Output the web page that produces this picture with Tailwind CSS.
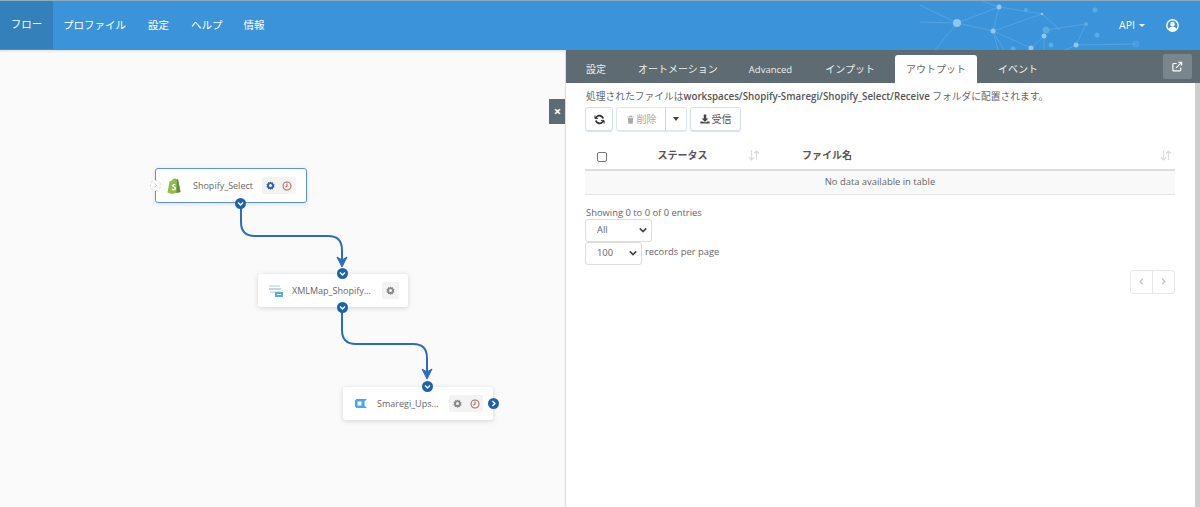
<!DOCTYPE html>
<html lang="ja">
<head>
    <meta charset="UTF-8">
    <title>Flow</title>
    <script src="https://cdn.jsdelivr.net/npm/@tailwindcss/browser@4"></script>
</head>
<body class="h-[507px] overflow-hidden bg-white font-['Open_Sans','Noto_Sans_CJK_JP',sans-serif] text-[11px] text-[#666]">

    <!-- Top nav -->
    <header class="relative h-[50px] bg-[#3b93da] border-t border-[#8fa9bd] flex items-stretch justify-between overflow-hidden text-white text-[10.5px]">
        <nav class="flex">
            <a class="w-[53px] mb-[1px] bg-[#3380ba] flex items-center justify-center">フロー</a>
            <a class="ml-[10px] flex items-center">プロファイル</a>
            <a class="ml-[22px] flex items-center">設定</a>
            <a class="ml-[22px] flex items-center">ヘルプ</a>
            <a class="ml-[21px] flex items-center">情報</a>
        </nav>
        <svg class="absolute left-[920px] top-[-1px]" width="240" height="50" viewBox="0 0 240 50">
            <g stroke="#8cc8f2" stroke-width="0.7" opacity="0.45" fill="none">
                <path d="M37 23L79 7L73 31L37 23M79 7L122 14L73 31M73 31L111 48M73 31L84 50M73 31L78 50M111 48L124 36V50M122 14L140 30M126 30L166 24M37 23L0 5M37 23L0 22M37 23L15 50M156 45L215 44M156 45L145 50M166 24L156 45M60 0L79 7"/>
            </g>
            <g fill="#8cc8f2">
                <circle cx="37" cy="23" r="4" />
                <circle cx="79" cy="7" r="2.500" />
                <circle cx="73" cy="31" r="2.500" />
                <circle cx="122" cy="14" r="1.200" />
                <circle cx="124" cy="36" r="2.500" />
                <circle cx="111" cy="48" r="2.500" />
                <circle cx="156" cy="45" r="2.500" />
            </g>
            <g fill="#5aaae6">
                <circle cx="166" cy="24" r="2" />
                <circle cx="126" cy="30" r="3.500" />
                <circle cx="131" cy="45" r="2.500" />
                <circle cx="175" cy="10" r="2.500" />
                <circle cx="177" cy="35" r="2.500" />
                <circle cx="106" cy="10" r="2" />
                <circle cx="93" cy="49" r="2.500" />
                <circle cx="216" cy="44" r="3.500" opacity="0.5" />
            </g>
        </svg>
        <div class="relative flex items-center">
            <span class="mr-[21px] flex items-center">API<span class="ml-[4px] border-x-[3px] border-t-[3.500px] border-x-transparent border-t-white"></span></span>
            <svg class="mr-[21px]" width="13" height="13" viewBox="0 0 24 24">
                <circle cx="12" cy="12" r="10.500" fill="none" stroke="#fff" stroke-width="2.600"/>
                <circle cx="12" cy="9.500" r="4.200" fill="#fff"/>
                <path d="M4.500 19c1.500-3.500 4-4.500 7.500-4.500s6 1 7.500 4.500c-2 2-4.500 3.500-7.500 3.500s-5.500-1.500-7.500-3.500z" fill="#fff"/>
            </svg>
        </div>
    </header>

    <main class="flex h-[457px]">
        <!-- Flow canvas -->
        <section class="relative w-[565px] bg-[#fafafa] shadow-[inset_0_3px_3px_-2px_rgba(0,0,0,0.12)]">
            <svg class="absolute inset-0" width="565" height="457" fill="none">
                <path d="M241 153V172Q241 186 255 186H328Q342 186 342 200V212" stroke="#2a6dbd" stroke-width="2"/>
                <path d="M337 207L342 217L347 207L342 210z" fill="#2a6dbd" stroke="#2a6dbd" stroke-width="1"/>
                <path d="M342 258V280Q342 294 356 294H413Q427 294 427 308V325" stroke="#2a6dbd" stroke-width="2"/>
                <path d="M422 319L427 329L432 319L427 322z" fill="#2a6dbd" stroke="#2a6dbd" stroke-width="1"/>
            </svg>

            <!-- Shopify_Select -->
            <div class="absolute left-[155px] top-[118px] w-[152px] h-[35px] bg-white border border-[#5b95d8] rounded-[3px] flex items-center shadow-[0_1px_4px_rgba(0,0,0,0.12)]">
                <svg class="ml-[11px]" width="14" height="16" viewBox="0 0 14 16">
                    <path d="M2.500 3.500L5 2.500C6 0.500 8 0 9.500 1L11 1.500L13.500 14L5 16L0.500 14.500z" fill="#8dbe4b"/>
                    <path d="M10 1.200L11 1.500L13.500 14L9.500 15z" fill="#5f8e3a"/>
                    <path d="M8.500 6.300C7 5.500 5 6 5 7.500C5 9 7.500 9 7.500 10.300C7.500 11.200 6.200 11.200 5 10.500L4.600 12C6.500 13 9 12.500 9 10.300C9 8.500 6.700 8.300 6.700 7.500C6.700 6.900 7.500 6.900 8.300 7.300z" fill="#fff"/>
                </svg>
                <span class="ml-[12px] w-[70px] mt-[1px] text-[9px] text-[#666]">Shopify_Select</span>
                <span class="ml-[-1px] w-[34px] h-[17px] bg-[#f3f3f3] rounded-[2px] flex items-center justify-center gap-[7px]">
                    <svg width="9" height="9" viewBox="0 0 24 24"><path d="M12 1l2.500 3.300 4-1 .8 4 3.700 2-2 3.700 2 3.700-4 1.500-.8 4-4-1-2.200 2.800-2.500-3.300-4 1-.8-4-3.700-2 2-3.700-2-3.700 4-1.500.8-4 4 1z" fill="#2f68ad"/><circle cx="12" cy="12" r="4" fill="#f3f3f3"/></svg>
                    <svg width="10" height="10" viewBox="0 0 24 24" fill="none" stroke="#b0655c" stroke-width="2.500"><circle cx="12" cy="12" r="9.500"/><path d="M12 6v6.500l-3.500 2"/></svg>
                </span>
                <span class="absolute left-[-6px] top-[11px] w-[11px] h-[11px] rounded-full border border-dashed border-[#ddd] bg-[#fafafa] flex items-center justify-center">
                    <svg width="5" height="5" viewBox="0 0 10 10" fill="none" stroke="#ccc" stroke-width="2"><path d="M3 1l4 4-4 4"/></svg>
                </span>
                <span class="absolute left-[79px] bottom-[-7px] w-[11px] h-[11px] rounded-full bg-[#1f62ac] flex items-center justify-center">
                    <svg width="7" height="7" viewBox="0 0 10 10" fill="none" stroke="#fff" stroke-width="2"><path d="M1.500 3.500L5 7l3.500-3.500"/></svg>
                </span>
            </div>

            <!-- XMLMap -->
            <div class="absolute left-[258px] top-[224px] w-[150px] h-[33px] bg-white rounded-[3px] flex items-center shadow-[0_1px_5px_rgba(0,0,0,0.16)]">
                <svg class="ml-[11px]" width="14" height="12" viewBox="0 0 14 12">
                    <rect x="0" y="0" width="11" height="2" fill="#d5e6f2"/>
                    <rect x="0" y="3" width="12" height="2" fill="#c3d4e0"/>
                    <rect x="1" y="6" width="10" height="2" fill="#d5e6f2"/>
                    <rect x="6" y="7" width="8" height="5" fill="#52b0e4"/>
                    <rect x="8" y="9" width="4" height="1" fill="#fff"/>
                </svg>
                <span class="ml-[9px] w-[90px] text-[9px] text-[#666]">XMLMap_Shopify...</span>
                <span class="w-[17px] h-[17px] bg-[#f3f3f3] rounded-[2px] flex items-center justify-center">
                    <svg width="9" height="9" viewBox="0 0 24 24"><path d="M12 1l2.500 3.300 4-1 .8 4 3.700 2-2 3.700 2 3.700-4 1.500-.8 4-4-1-2.200 2.800-2.500-3.300-4 1-.8-4-3.700-2 2-3.700-2-3.700 4-1.500.8-4 4 1z" fill="#8a8a8a"/><circle cx="12" cy="12" r="4" fill="#f3f3f3"/></svg>
                </span>
                <span class="absolute left-[79px] top-[-6px] w-[11px] h-[11px] rounded-full bg-[#1f62ac] flex items-center justify-center">
                    <svg width="7" height="7" viewBox="0 0 10 10" fill="none" stroke="#fff" stroke-width="2"><path d="M1.500 3.500L5 7l3.500-3.500"/></svg>
                </span>
                <span class="absolute left-[79px] bottom-[-6px] w-[11px] h-[11px] rounded-full bg-[#1f62ac] flex items-center justify-center">
                    <svg width="7" height="7" viewBox="0 0 10 10" fill="none" stroke="#fff" stroke-width="2"><path d="M1.500 3.500L5 7l3.500-3.500"/></svg>
                </span>
            </div>

            <!-- Smaregi_Upsert -->
            <div class="absolute left-[343px] top-[337px] w-[150px] h-[33px] bg-white rounded-[3px] flex items-center shadow-[0_1px_5px_rgba(0,0,0,0.16)]">
                <svg class="ml-[12px]" width="12" height="9" viewBox="0 0 12 9">
                    <path d="M1.500 0H12L9.500 2.500V6.500L12 9H1.500L0 7.500V1.500z" fill="#43a7f2"/>
                    <rect x="2.500" y="2.500" width="4" height="4" fill="#fff"/>
                </svg>
                <span class="ml-[10px] w-[72px] text-[9px] text-[#666]">Smaregi_Ups...</span>
                <span class="w-[34px] h-[17px] bg-[#f3f3f3] rounded-[2px] flex items-center justify-center gap-[8px]">
                    <svg width="9" height="9" viewBox="0 0 24 24"><path d="M12 1l2.500 3.300 4-1 .8 4 3.700 2-2 3.700 2 3.700-4 1.500-.8 4-4-1-2.200 2.800-2.500-3.300-4 1-.8-4-3.700-2 2-3.700-2-3.700 4-1.500.8-4 4 1z" fill="#8a8a8a"/><circle cx="12" cy="12" r="4" fill="#f3f3f3"/></svg>
                    <svg width="10" height="10" viewBox="0 0 24 24" fill="none" stroke="#b0655c" stroke-width="2.500"><circle cx="12" cy="12" r="9.500"/><path d="M12 6v6.500l-3.500 2"/></svg>
                </span>
                <span class="absolute left-[79px] top-[-6px] w-[11px] h-[11px] rounded-full bg-[#1f62ac] flex items-center justify-center">
                    <svg width="7" height="7" viewBox="0 0 10 10" fill="none" stroke="#fff" stroke-width="2"><path d="M1.500 3.500L5 7l3.500-3.500"/></svg>
                </span>
                <span class="absolute right-[-6px] top-[11px] w-[11px] h-[11px] rounded-full bg-[#1f62ac] flex items-center justify-center">
                    <svg width="7" height="7" viewBox="0 0 10 10" fill="none" stroke="#fff" stroke-width="2"><path d="M3.500 1.500L7 5 3.500 8.500"/></svg>
                </span>
            </div>

            <!-- Close panel -->
            <button class="absolute right-[-1px] top-[49px] w-[17px] h-[25px] bg-[#5e6b73] text-white text-[13px] font-bold flex items-center justify-center">&times;</button>
        </section>

        <!-- Right panel -->
        <section class="relative flex-1 border-l border-[#ddd] flex flex-col">
            <div class="h-[33px] bg-[#5e6b73] flex items-end text-[10px] text-[#eee] relative">
                <a class="ml-[20px] mb-[6px]">設定</a>
                <a class="ml-[32px] mb-[6px]">オートメーション</a>
                <a class="ml-[31px] mb-[6px] text-[9.500px]">Advanced</a>
                <a class="ml-[33px] mb-[6px]">インプット</a>
                <a class="ml-[20px] w-[82px] h-[28px] bg-white rounded-t-[3px] text-[#666] flex items-center justify-center">アウトプット</a>
                <a class="ml-[21px] mb-[6px]">イベント</a>
                <button class="absolute right-[8px] top-[4px] w-[29px] h-[25px] bg-[#7a868e] rounded-[2px] flex items-center justify-center">
                    <svg width="11" height="11" viewBox="0 0 24 24" fill="none" stroke="#fff" stroke-width="2.600"><path d="M19 14v6a1.500 1.500 0 0 1-1.500 1.500h-14A1.500 1.500 0 0 1 2 20V7a1.500 1.500 0 0 1 1.500-1.500H10"/><path d="M9 15L21 3M14 3h7v7"/></svg>
                </button>
            </div>

            <!-- scrollbar strip -->
            <div class="absolute right-0 top-[33px] bottom-0 w-[5px] bg-[#cfcfcf]"></div>

            <div class="pl-[19px] pr-[25px] flex flex-col">
                <p class="mt-[6px] ml-[1px] h-[15px] leading-[15px] text-[9.750px] whitespace-nowrap">処理されたファイルは<b class="font-semibold text-[#555]">workspaces/Shopify-Smaregi/Shopify_Select/Receive</b> フォルダに配置されます。</p>

                <div class="mt-[3px] flex gap-[3px]">
                    <button class="w-[28px] h-[24px] border border-[#d5e0e8] rounded-[3px] flex items-center justify-center shadow-[0_1px_1px_rgba(80,140,190,0.25)]">
                        <svg width="11" height="11" viewBox="0 0 24 24" fill="none" stroke="#333" stroke-width="4"><path d="M20 10a8.500 8.500 0 0 0-15-3L3 9M4 14a8.500 8.500 0 0 0 15 3l2-2"/><path d="M2 3v7h7M22 21v-7h-7" stroke-width="2"/></svg>
                    </button>
                    <div class="flex h-[24px] border border-[#dfe6ec] rounded-[3px] shadow-[0_1px_1px_rgba(80,140,190,0.2)]">
                        <span class="w-[49px] flex items-center justify-center gap-[2px] text-[10px] text-[#aaa] border-r border-[#ccd4da]">
                            <svg width="9" height="9" viewBox="0 0 24 24" fill="#aaa"><path d="M9 2h6l1 2h5v2H3V4h5zM5 8h14l-1 15H6z"/></svg>削除
                        </span>
                        <span class="w-[20px] flex items-center justify-center"><span class="border-x-[3.500px] border-t-[4px] border-x-transparent border-t-[#444]"></span></span>
                    </div>
                    <button class="w-[51px] h-[24px] border border-[#d5e0e8] rounded-[3px] flex items-center justify-center gap-[2px] text-[10px] text-[#555] shadow-[0_1px_1px_rgba(80,140,190,0.25)]">
                        <svg width="10" height="10" viewBox="0 0 24 24" fill="#444"><path d="M9 1h6v10h5l-8 8-8-8h5zM1 18h6l2 2h6l2-2h6v5H1z"/></svg>受信
                    </button>
                </div>

                <table class="mt-[13px] w-[590px] table-fixed">
                    <thead>
                        <tr class="h-[26px] border-b-2 border-[#ddd] text-[10px] font-semibold text-[#555]">
                            <th class="w-[34px] pl-[12px] text-left font-normal">
                                <span class="block w-[10px] h-[10px] border border-[#777] rounded-[2px]"></span>
                            </th>
                            <th class="w-[143px] font-semibold relative">
                                <span class="relative left-[-8px] top-[-1px]">ステータス</span>
                                <svg class="absolute right-[2px] top-[6px]" width="12" height="11" viewBox="0 0 12 11" fill="none" stroke="#ddd" stroke-width="1.200"><path d="M3.500 0V10M1 7.500L3.500 10L6 7.500M8.500 10V1M6 3.500L8.500 1L11 3.500"/></svg>
                            </th>
                            <th class="pl-[40px] text-left font-semibold relative">
                                <span class="relative top-[-1px]">ファイル名</span>
                                <svg class="absolute right-[3px] top-[6px]" width="12" height="11" viewBox="0 0 12 11" fill="none" stroke="#ddd" stroke-width="1.200"><path d="M3.500 0V10M1 7.500L3.500 10L6 7.500M8.500 10V1M6 3.500L8.500 1L11 3.500"/></svg>
                            </th>
                        </tr>
                    </thead>
                    <tbody>
                        <tr class="h-[24px] bg-[#f9f9f9] border-b border-[#e5e5e5]">
                            <td colspan="3" class="text-center text-[9.400px] text-[#666]">No data available in table</td>
                        </tr>
                    </tbody>
                </table>

                <p class="mt-[11px] ml-[1px] h-[13px] leading-[13px] text-[9.400px]">Showing 0 to 0 of 0 entries</p>
                <div class="w-[67px] h-[23px] border border-[#ddd] rounded-[3px] flex items-center justify-between pl-[11px] pr-[4px] text-[9.400px]">
                    All
                    <svg width="8" height="6" viewBox="0 0 10 6" fill="none" stroke="#444" stroke-width="2"><path d="M1 1l4 4 4-4"/></svg>
                </div>
                <div class="flex items-center">
                    <div class="w-[57px] h-[23px] border border-[#ddd] rounded-[3px] flex items-center justify-between pl-[11px] pr-[4px] text-[9.400px]">
                        100
                        <svg width="8" height="6" viewBox="0 0 10 6" fill="none" stroke="#444" stroke-width="2"><path d="M1 1l4 4 4-4"/></svg>
                    </div>
                    <span class="ml-[3px] mb-[2px] text-[9.400px]">records per page</span>
                </div>
                <div class="mt-[5px] self-end flex w-[45px] h-[24px] border border-[#e8e8e8] rounded-[3px]">
                    <span class="flex-1 border-r border-[#e8e8e8] flex items-center justify-center">
                        <svg width="5" height="7" viewBox="0 0 6 10" fill="none" stroke="#bbb" stroke-width="1.600"><path d="M5 1L1 5l4 4"/></svg>
                    </span>
                    <span class="flex-1 flex items-center justify-center">
                        <svg width="5" height="7" viewBox="0 0 6 10" fill="none" stroke="#bbb" stroke-width="1.600"><path d="M1 1l4 4-4 4"/></svg>
                    </span>
                </div>
            </div>
        </section>
    </main>
</body>
</html>
